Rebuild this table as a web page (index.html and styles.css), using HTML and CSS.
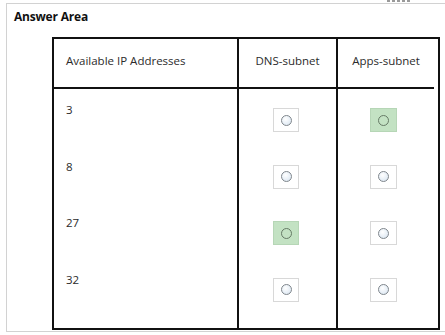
FILE: index.html
```html
<!DOCTYPE html>
<html>
<head>
<meta charset="utf-8">
<link rel="stylesheet" href="styles.css">
</head>
<body>
<div class="topbar"><span class="dots"></span></div>
<div class="panel">
  <div class="title">Answer Area</div>
  <div class="table">
    <div class="cell head first">Available IP Addresses</div>
    <div class="cell head center">DNS-subnet</div>
    <div class="cell head center last">Apps-subnet</div>

    <div class="cell body first">
      <div class="item"><span class="label">3</span></div>
      <div class="item"><span class="label">8</span></div>
      <div class="item"><span class="label">27</span></div>
      <div class="item"><span class="label">32</span></div>
    </div>
    <div class="cell body center">
      <div class="item"><span class="radio"><span class="dot"></span></span></div>
      <div class="item"><span class="radio"><span class="dot"></span></span></div>
      <div class="item"><span class="radio selected"><span class="dot"></span></span></div>
      <div class="item"><span class="radio"><span class="dot"></span></span></div>
    </div>
    <div class="cell body center last">
      <div class="item"><span class="radio selected wide"><span class="dot"></span></span></div>
      <div class="item"><span class="radio wide"><span class="dot"></span></span></div>
      <div class="item"><span class="radio wide"><span class="dot"></span></span></div>
      <div class="item"><span class="radio wide"><span class="dot"></span></span></div>
    </div>
  </div>
</div>
</body>
</html>
```

FILE: styles.css
```css
html, body {
  margin: 0;
  padding: 0;
  background: #ffffff;
}

body {
  width: 445px;
  height: 335px;
  overflow: hidden;
  font-family: "Open Sans", "Noto Sans", "DejaVu Sans", sans-serif;
  color: #2b2b2b;
}

.topbar {
  height: 3px;
  display: flex;
  justify-content: flex-end;
  padding-right: 35px;
}

.dots {
  width: 23px;
  height: 2px;
  background: repeating-linear-gradient(90deg, #9a9a9a 0 3px, transparent 3px 5px);
}

.panel {
  margin-left: 6px;
  width: 460px;
  height: 329px;
  border: 1px solid #d2d2d2;
  border-right: none;
  box-sizing: border-box;
}

.title {
  padding: 5px 0 0 7px;
  height: 28px;
  box-sizing: border-box;
  font-size: 12px;
  font-weight: 700;
  color: #111;
  line-height: 16px;
  letter-spacing: -0.2px;
}

.table {
  margin-left: 45px;
  margin-top: 5px;
  width: 384px;
  display: grid;
  grid-template-columns: 185px 99px 96px;
  border: 2px solid #111;
}

.cell {
  border-right: 2px solid #111;
  font-size: 11.5px;
  line-height: 16px;
}

.cell.last {
  border-right: none;
}

.head {
  height: 50px;
  border-bottom: 2px solid #111;
  box-sizing: border-box;
  display: flex;
  align-items: center;
  padding-bottom: 5px;
}

.head.first {
  padding-left: 12px;
}

.head.center {
  justify-content: center;
}

.body {
  height: 239px;
  padding-top: 13px;
  box-sizing: border-box;
  display: flex;
  flex-direction: column;
}

.item {
  height: 56.5px;
  flex: none;
  display: flex;
}

.body.first .item {
  padding-left: 12px;
}

.label {
  display: block;
}

.body.center .item {
  justify-content: center;
}

.radio {
  margin-top: 6px;
  width: 26px;
  height: 24px;
  box-sizing: border-box;
  border: 1px solid #d8d8d8;
  background: #ffffff;
  display: flex;
  align-items: center;
  justify-content: center;
  margin-right: 3px;
}

.radio.wide {
  width: 27px;
  margin-right: 5px;
}

.radio.selected {
  background: #c3e2c3;
  border-color: #b6d6b6;
}

.dot {
  width: 9px;
  height: 9px;
  border-radius: 50%;
  border: 1px solid #7f868c;
  background: radial-gradient(circle at 40% 35%, #ffffff 0, #e6eef6 60%, #d4dfea 100%);
}

.radio.selected .dot {
  border-color: #667a66;
  background: #c3e2c3;
}
```
